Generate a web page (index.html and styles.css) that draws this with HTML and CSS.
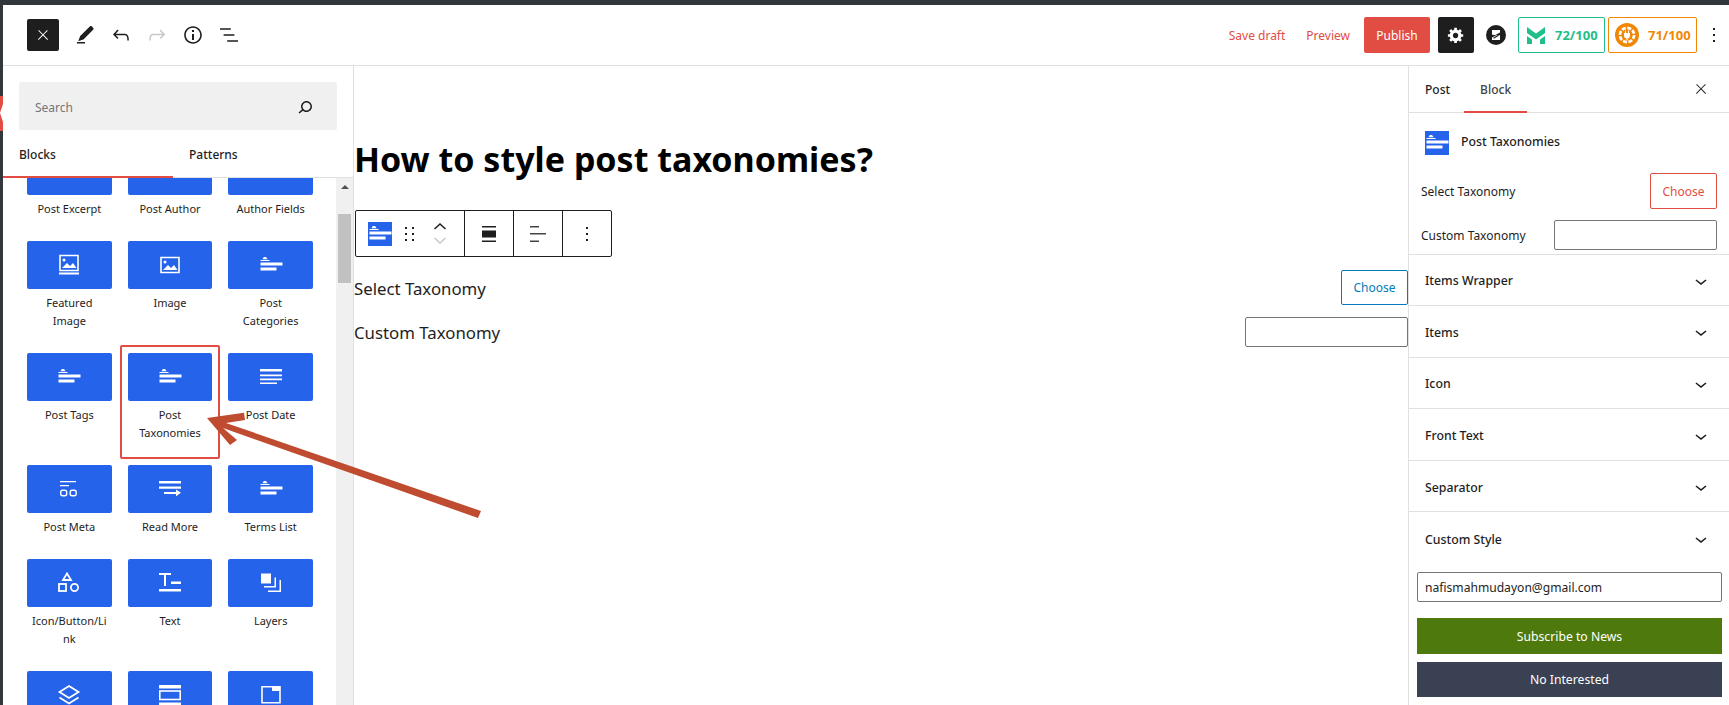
FILE: index.html
```html
<!DOCTYPE html>
<html>
    <head>
        <title>How to style post taxonomies?</title>
        <meta charset="UTF-8">
        <meta name="viewport" content="width=device-width, initial-scale=1.0">
        <link rel="stylesheet" href="styles.css">
    </head>
    <body>
        <svg class="iconDefs" width="0" height="0">
            <symbol id="i-close" viewBox="0 0 24 24"><path d="M13 11.800l6.100-6.300-1-1-6.100 6.200-6.100-6.200-1 1 6.100 6.300-6.500 6.700 1 1 6.500-6.600 6.500 6.600 1-1z"/></symbol>
            <symbol id="i-chevron" viewBox="0 0 24 24"><path d="M17.500 11.600L12 16l-5.500-4.400.9-1.200L12 14l4.500-3.600 1 1.200z"/></symbol>
            <symbol id="i-terms" viewBox="0 0 24 24"><path d="M3.500 6.200L4.800 4H7l1.600 2.200zM1.500 7h9v1h-9zM1.500 9.500h22v3h-22zM1.500 14.500h16v3h-16z"/></symbol>
            <symbol id="i-dots" viewBox="0 0 24 24"><path d="M11 5h2v2h-2zM11 11h2v2h-2zM11 17h2v2h-2z"/></symbol>
        </svg>

        <div class="adminTop"></div>
        <div class="shell">
            <div class="adminSide"><div class="adminSideCurrent"></div></div>
            <div class="editor">
                <div class="topBar">
                    <div class="topLeft">
                        <button class="closeButton"><svg class="iconWhite" width="16" height="16"><use href="#i-close"/></svg></button>
                        <svg class="icon" viewBox="0 0 24 24" width="24" height="24"><path d="M4 20.500h8V19H4zM18.900 3.500c-.6-.6-1.500-.6-2.100 0L7.200 13.100c-.1.1-.2.2-.2.3l-1.500 4.200c-.1.3.2.6.5.5l4.200-1.500c.1 0 .2-.1.3-.2l9.600-9.600c.6-.6.6-1.500 0-2.100z"/></svg>
                        <svg class="icon" viewBox="0 0 24 24" width="24" height="24"><path d="M18.300 11.700c-.6-.6-1.400-.9-2.300-.9H6.700l2.900-3.300-1.100-1-4.500 5L8.500 16l1-1-2.700-2.700H16c.5 0 .9.2 1.300.5 1 1 1 3.400 1 4.500v.3h1.500v-.2c0-1.500 0-4.300-1.500-5.700z"/></svg>
                        <svg class="icon iconOff" viewBox="0 0 24 24" width="24" height="24"><path d="M15.600 6.500l-1.100 1 2.900 3.300H8c-.9 0-1.700.3-2.300.9-1.400 1.500-1.400 4.200-1.400 5.600v.2h1.500v-.3c0-1.100 0-3.500 1-4.500.3-.3.7-.5 1.300-.5h9.200L14.500 15l1.100 1.100 4.600-4.600-4.600-5z"/></svg>
                        <svg class="icon" viewBox="0 0 24 24" width="24" height="24"><path d="M12 3.200c-4.800 0-8.800 3.900-8.800 8.800 0 4.800 3.900 8.800 8.800 8.800 4.800 0 8.800-3.900 8.800-8.800 0-4.800-4-8.800-8.800-8.800zm0 16c-4 0-7.200-3.300-7.200-7.200C4.800 8 8 4.800 12 4.800s7.200 3.300 7.200 7.200c0 4-3.200 7.200-7.200 7.200zM11 17h2v-6h-2v6zm0-8h2V7h-2v2z"/></svg>
                        <svg class="icon" viewBox="0 0 24 24" width="24" height="24"><path d="M13.800 5.200H3v1.500h10.800V5.200zm-3.600 12v1.500H21v-1.500H10.200zm7.200-6H6.600v1.500h10.800v-1.500z"/></svg>
                    </div>
                    <div class="topRight">
                        <a class="topLink saveLink">Save draft</a>
                        <a class="topLink previewLink">Preview</a>
                        <button class="publishButton">Publish</button>
                        <button class="gearButton">
                            <svg class="iconWhite" viewBox="0 0 20 20" width="18" height="18"><path d="M18 12h-2.180c-.17.7-.44 1.350-.81 1.930l1.540 1.540-2.100 2.100-1.540-1.540c-.58.36-1.230.63-1.910.79V19H8v-2.180c-.68-.16-1.330-.43-1.910-.79l-1.540 1.540-2.120-2.120 1.540-1.540c-.36-.58-.63-1.230-.79-1.910H1V9.030h2.170c.16-.7.44-1.350.8-1.940L2.430 5.550l2.100-2.100 1.540 1.540c.58-.37 1.240-.64 1.930-.81V2h3v2.180c.68.16 1.330.43 1.910.79l1.540-1.540 2.120 2.120-1.540 1.540c.36.59.64 1.240.8 1.940H18V12zm-8.500 1.500c1.660 0 3-1.340 3-3s-1.340-3-3-3-3 1.340-3 3 1.340 3 3 3z"/></svg>
                        </button>
                        <svg class="brandLogo" viewBox="0 0 20 20" width="20" height="20">
                            <circle cx="10" cy="10" r="10" fill="#1e1e1e"/>
                            <path d="M6 5h8v2.400L9.400 10 14 10.200V15H6v-2.400L10.600 10 6 9.800z" fill="#fff"/>
                            <path d="M7.500 13.200l5-3" stroke="#1e1e1e" stroke-width="1.200"/>
                        </svg>
                        <div class="scoreBadge scoreGreen">
                            <svg viewBox="0 0 18 17" width="18" height="17"><path d="M0 0l9 6.500L18 0v6l-9 6.500L0 6zM0 9l5 3.600V17H0zM18 9l-5 3.600V17h5z" fill="#1fbe8a"/></svg>
                            <span>72/100</span>
                        </div>
                        <div class="scoreBadge scoreOrange">
                            <svg viewBox="0 0 24 24" width="24" height="24">
                                <circle cx="12" cy="12" r="12" fill="#f28705"/>
                                <circle cx="12" cy="12" r="7" fill="none" stroke="#fff" stroke-width="3" stroke-dasharray="4 1.500"/>
                                <circle cx="12" cy="12" r="5.600" fill="#f28705"/>
                                <path d="M9 10h6v2.500a3 3 0 0 1-6 0zM10 7.500h1V10h-1zM13 7.500h1V10h-1zM11.400 15h1.200v2.500h-1.200z" fill="#fff"/>
                            </svg>
                            <span>71/100</span>
                        </div>
                        <svg class="icon moreIcon" width="24" height="24"><use href="#i-dots"/></svg>
                    </div>
                </div>

                <div class="mainArea">
                    <div class="inserter">
                        <div class="searchWrap">
                            <div class="searchBox">
                                <span>Search</span>
                                <svg class="icon" viewBox="0 0 24 24" width="24" height="24"><path d="M13.500 6C10.500 6 8 8.500 8 11.500c0 1.100.3 2.100.9 3l-3.400 3 1 1.100 3.400-2.900c1 .9 2.200 1.400 3.600 1.400 3 0 5.500-2.500 5.500-5.500C19 8.500 16.500 6 13.500 6zm0 9.500c-2.200 0-4-1.800-4-4s1.800-4 4-4 4 1.800 4 4-1.800 4-4 4z"/></svg>
                            </div>
                        </div>
                        <div class="inserterTabs">
                            <div class="inserterTab tabActive">Blocks</div>
                            <div class="inserterTab">Patterns</div>
                        </div>
                        <div class="inserterBody">
                            <div class="blockScroll">
                                <div class="blockGrid">
                                    <div class="blockItem"><div class="blockTile"></div><div class="blockName">Post Excerpt</div></div>
                                    <div class="blockItem"><div class="blockTile"></div><div class="blockName">Post Author</div></div>
                                    <div class="blockItem"><div class="blockTile"></div><div class="blockName">Author Fields</div></div>

                                    <div class="blockItem">
                                        <div class="blockTile"><svg class="tileIcon" viewBox="0 0 24 24" width="24" height="24"><path d="M3 2.500h18v15H3z" fill="none" stroke="#fff" stroke-width="1.600"/><path d="M5 15l5-5 3 3 3-3 3.500 5z" fill="#fff"/><circle cx="7" cy="7" r="1.500" fill="#fff"/><path d="M2 19.500h20v2H2z" fill="#fff"/></svg></div>
                                        <div class="blockName">Featured<br>Image</div>
                                    </div>
                                    <div class="blockItem">
                                        <div class="blockTile"><svg class="tileIcon" viewBox="0 0 24 24" width="24" height="24"><path d="M3 4.500h18v15H3z" fill="none" stroke="#fff" stroke-width="1.600"/><path d="M5 17l5-5 3 3 3-3 3.500 5z" fill="#fff"/><circle cx="7" cy="9" r="1.500" fill="#fff"/></svg></div>
                                        <div class="blockName">Image</div>
                                    </div>
                                    <div class="blockItem">
                                        <div class="blockTile"><svg class="tileIcon iconWhite" width="24" height="24"><use href="#i-terms"/></svg></div>
                                        <div class="blockName">Post<br>Categories</div>
                                    </div>

                                    <div class="blockItem">
                                        <div class="blockTile"><svg class="tileIcon iconWhite" width="24" height="24"><use href="#i-terms"/></svg></div>
                                        <div class="blockName">Post Tags</div>
                                    </div>
                                    <div class="blockItem marked">
                                        <div class="blockTile"><svg class="tileIcon iconWhite" width="24" height="24"><use href="#i-terms"/></svg></div>
                                        <div class="blockName">Post<br>Taxonomies</div>
                                    </div>
                                    <div class="blockItem">
                                        <div class="blockTile"><svg class="tileIcon iconWhite" viewBox="0 0 24 24" width="24" height="24"><path d="M1 4h22v2.400H1zM1 9.500h22v1.800H1zM1 13.500h22v1.800H1zM1 17.500h17v1.600H1z"/></svg></div>
                                        <div class="blockName">Post Date</div>
                                    </div>

                                    <div class="blockItem">
                                        <div class="blockTile"><svg class="tileIcon" viewBox="0 0 24 24" width="24" height="24"><path d="M3 4h16v1.200H3zM3 8h9v1.200H3z" fill="#fff"/><rect x="3.700" y="13.200" width="6" height="5.600" rx="2" fill="none" stroke="#fff" stroke-width="1.400"/><rect x="13.200" y="13.200" width="6" height="5.600" rx="2" fill="none" stroke="#fff" stroke-width="1.400"/></svg></div>
                                        <div class="blockName">Post Meta</div>
                                    </div>
                                    <div class="blockItem">
                                        <div class="blockTile"><svg class="tileIcon iconWhite" viewBox="0 0 24 24" width="24" height="24"><path d="M1 4h22v2.600H1zM1 9.500h22v2.200H1zM6 15h12v-2.500l5 3.300-5 3.400V17H6z"/></svg></div>
                                        <div class="blockName">Read More</div>
                                    </div>
                                    <div class="blockItem">
                                        <div class="blockTile"><svg class="tileIcon iconWhite" width="24" height="24"><use href="#i-terms"/></svg></div>
                                        <div class="blockName">Terms List</div>
                                    </div>

                                    <div class="blockItem">
                                        <div class="blockTile"><svg class="tileIcon" viewBox="0 0 24 24" width="24" height="24" fill="none" stroke="#fff" stroke-width="1.800"><path d="M10 2.500l4 6.500H6z"/><rect x="2" y="13" width="7" height="7"/><circle cx="17.500" cy="16.500" r="3.600"/></svg></div>
                                        <div class="blockName">Icon/Button/Li<br>nk</div>
                                    </div>
                                    <div class="blockItem">
                                        <div class="blockTile"><svg class="tileIcon iconWhite" viewBox="0 0 24 24" width="24" height="24"><path d="M1 2h12v2H8v11H6V4H1zM13 10.500h10v2.400H13zM1 18h22v2.600H1z"/></svg></div>
                                        <div class="blockName">Text</div>
                                    </div>
                                    <div class="blockItem">
                                        <div class="blockTile"><svg class="tileIcon iconWhite" viewBox="0 0 24 24" width="24" height="24"><path d="M2 2.500h10v10H2zM15.500 6.500H17V15H15.500zM5 15h12v1.500H5zM20.500 9H22v12h-1.500zM9 19.500h13V21H9z"/></svg></div>
                                        <div class="blockName">Layers</div>
                                    </div>

                                    <div class="blockItem">
                                        <div class="blockTile"><svg class="tileIcon" viewBox="0 0 24 24" width="24" height="24" fill="none" stroke="#fff" stroke-width="1.800"><path d="M12 3l9.500 6-9.500 6-9.500-6zM2.500 14.500l9.500 6 9.500-6"/></svg></div>
                                    </div>
                                    <div class="blockItem">
                                        <div class="blockTile"><svg class="tileIcon" viewBox="0 0 24 24" width="24" height="24"><path d="M1 2h22v3.400H1zM1 19.500h22V23H1z" fill="#fff"/><rect x="1.800" y="8" width="20.400" height="8.500" fill="none" stroke="#fff" stroke-width="1.600"/></svg></div>
                                    </div>
                                    <div class="blockItem">
                                        <div class="blockTile"><svg class="tileIcon" viewBox="0 0 24 24" width="24" height="24"><path d="M3 3.800h18v16H3z" fill="none" stroke="#fff" stroke-width="1.600"/><path d="M13 3.800h8V8h-8z" fill="#fff"/></svg></div>
                                    </div>
                                </div>
                            </div>
                            <div class="scrollTrack">
                                <div class="scrollUp"></div>
                                <div class="scrollThumb"></div>
                            </div>
                        </div>
                    </div>

                    <div class="canvas">
                        <h1 class="postTitle">How to style post taxonomies?</h1>
                        <div class="blockToolbar">
                            <div class="toolGroup toolMain">
                                <div class="toolTile"><svg class="iconWhite" width="24" height="24"><use href="#i-terms"/></svg></div>
                                <svg class="toolDrag" viewBox="0 0 12 18" width="12" height="18"><path d="M1 2h2v2H1zM8 2h2v2H8zM1 8h2v2H1zM8 8h2v2H8zM1 14h2v2H1zM8 14h2v2H8z"/></svg>
                                <div class="toolMover">
                                    <svg viewBox="0 0 14 8" width="14" height="8" fill="none" stroke="#1e1e1e" stroke-width="1.500"><path d="M1.500 7L7 2l5.500 5"/></svg>
                                    <svg viewBox="0 0 14 8" width="14" height="8" fill="none" stroke="#c8c8c8" stroke-width="1.500"><path d="M1.500 1L7 6l5.500-5"/></svg>
                                </div>
                            </div>
                            <div class="toolGroup">
                                <svg viewBox="0 0 14 16" width="14" height="16"><path d="M0 0h14v1.500H0zM0 4.500h14v7H0zM0 14.500h14V16H0z" fill="#1e1e1e"/></svg>
                            </div>
                            <div class="toolGroup">
                                <svg viewBox="0 0 16 16" width="16" height="16"><path d="M0 0h9v1.500H0zM0 7h16v1.500H0zM0 14.500h9V16H0z" fill="#444"/></svg>
                            </div>
                            <div class="toolGroup">
                                <svg class="icon" width="24" height="24"><use href="#i-dots"/></svg>
                            </div>
                        </div>
                        <div class="fieldRow">
                            <span class="fieldLabel">Select Taxonomy</span>
                            <button class="chooseButton">Choose</button>
                        </div>
                        <div class="fieldRow fieldRowInput">
                            <span>Custom Taxonomy</span>
                            <input class="fieldInput" type="text">
                        </div>
                    </div>

                    <div class="sidebar">
                        <div class="sideTabs">
                            <div class="sideTab">Post</div>
                            <div class="sideTab sideTabActive">Block</div>
                            <svg class="icon sideClose" width="16" height="16"><use href="#i-close"/></svg>
                        </div>
                        <div class="sideBlockHead">
                            <div class="sideTile"><svg class="iconWhite" width="24" height="24"><use href="#i-terms"/></svg></div>
                            <span class="sideBlockName">Post Taxonomies</span>
                        </div>
                        <div class="sideField">
                            <span>Select Taxonomy</span>
                            <button class="sideChoose">Choose</button>
                        </div>
                        <div class="sideField sideFieldInput">
                            <span>Custom Taxonomy</span>
                            <input class="sideInput" type="text">
                        </div>
                        <div class="panelRow firstPanel"><span>Items Wrapper</span><svg class="icon" width="24" height="24"><use href="#i-chevron"/></svg></div>
                        <div class="panelRow"><span>Items</span><svg class="icon" width="24" height="24"><use href="#i-chevron"/></svg></div>
                        <div class="panelRow"><span>Icon</span><svg class="icon" width="24" height="24"><use href="#i-chevron"/></svg></div>
                        <div class="panelRow"><span>Front Text</span><svg class="icon" width="24" height="24"><use href="#i-chevron"/></svg></div>
                        <div class="panelRow"><span>Separator</span><svg class="icon" width="24" height="24"><use href="#i-chevron"/></svg></div>
                        <div class="panelRow lastPanel"><span>Custom Style</span><svg class="icon" width="24" height="24"><use href="#i-chevron"/></svg></div>
                        <div class="newsBox">
                            <input class="newsInput" type="text" value="nafismahmudayon@gmail.com">
                            <button class="newsButton subscribeButton">Subscribe to News</button>
                            <button class="newsButton noButton">No Interested</button>
                        </div>
                    </div>
                </div>
            </div>
        </div>

        <!-- red arrow drawn over the screenshot -->
        <svg class="arrowMark" viewBox="0 0 1729 705" width="1729" height="705">
            <path d="M207 418L244 412.700L245 420L226 423L481 511L478 518L223 428L237 440L230 445Z" fill="#bf4b30"/>
        </svg>
    </body>
</html>
```
FILE: styles.css
```css
*{
    box-sizing: border-box;
}
body{
    margin: 0;
    width: 1729px;
    height: 705px;
    overflow: hidden;
    position: relative;
    background-color: #fff;
    color: #1e1e1e;
    font-family: "Noto Sans", sans-serif;
    font-size: 12px;
}
button, input{
    font-family: inherit;
}
svg{
    display: block;
    flex: none;
}
.iconDefs{
    position: absolute;
}
.icon{
    fill: #1e1e1e;
}
.iconWhite{
    fill: #fff;
}
.iconOff{
    fill: #c8c8c8;
}

.adminTop{
    height: 5px;
    background-color: #32373c;
}
.shell{
    display: flex;
    height: 700px;
}
.adminSide{
    width: 3px;
    background-color: #32373c;
    padding-top: 91px;
}
.adminSideCurrent{
    height: 35px;
    background-color: #e24d43;
    position: relative;
}
/* little notch of the current admin menu item */
.adminSideCurrent::after{
    content: "";
    position: absolute;
    top: 8px;
    left: 0;
    border-top: 9px solid transparent;
    border-bottom: 9px solid transparent;
    border-right: 3px solid #fff;
}
.editor{
    flex: 1;
    min-width: 0;
    display: flex;
    flex-direction: column;
}

/* top bar */
.topBar{
    height: 61px;
    flex: none;
    border-bottom: 1px solid #e0e0e0;
    display: flex;
    justify-content: space-between;
    align-items: center;
    padding-left: 24px;
    padding-right: 3px;
}
.topLeft{
    display: flex;
    align-items: center;
    gap: 12px;
}
.closeButton{
    width: 32px;
    height: 32px;
    margin-right: 2px;
    padding: 8px;
    border: none;
    border-radius: 2px;
    background-color: #1e1e1e;
}
.topRight{
    display: flex;
    align-items: center;
}
.topLink{
    color: #e24d43;
    font-size: 12px;
}
.saveLink{
    margin-right: 21px;
}
.previewLink{
    margin-right: 14px;
}
.publishButton{
    width: 66px;
    height: 36px;
    border: none;
    border-radius: 2px;
    background-color: #e24d43;
    color: #fff;
    font-size: 12px;
    margin-right: 8px;
}
.gearButton{
    width: 36px;
    height: 36px;
    border: none;
    border-radius: 2px;
    background-color: #1e1e1e;
    padding: 9px;
    margin-right: 12px;
}
.brandLogo{
    margin-right: 12px;
}
.scoreBadge{
    height: 36px;
    display: flex;
    align-items: center;
    border-radius: 2px;
    font-size: 13px;
    font-weight: 700;
}
.scoreGreen{
    width: 87px;
    border: 1px solid #1fbe8a;
    color: #1fbe8a;
    padding-left: 8px;
    gap: 10px;
    margin-right: 3px;
}
.scoreOrange{
    width: 89px;
    border: 1px solid #f28705;
    color: #f28705;
    padding-left: 6px;
    gap: 9px;
    margin-right: 5px;
}

/* inserter */
.mainArea{
    flex: 1;
    min-height: 0;
    display: flex;
}
.inserter{
    width: 351px;
    flex: none;
    border-right: 1px solid #e0e0e0;
    display: flex;
    flex-direction: column;
}
.searchWrap{
    padding: 16px 16px 0;
}
.searchBox{
    height: 48px;
    background-color: #f0f0f0;
    border-radius: 2px;
    display: flex;
    align-items: center;
    justify-content: space-between;
    padding: 2px 20px 0 16px;
    color: #757575;
}
.inserterTabs{
    display: flex;
    height: 48px;
    flex: none;
    border-bottom: 1px solid #e0e0e0;
}
.inserterTab{
    width: 170px;
    padding-left: 16px;
    line-height: 49px;
    height: 48px;
    font-weight: 500;
}
.tabActive{
    border-bottom: 2px solid #e24d43;
}
.inserterBody{
    flex: 1;
    min-height: 0;
    display: flex;
}
.blockScroll{
    flex: 1;
    min-width: 0;
    overflow: hidden;
}
.blockGrid{
    display: grid;
    grid-template-columns: repeat(3, minmax(0, 1fr));
    column-gap: 16px;
    margin-top: -31px;
    padding: 0 23px 0 24px;
}
.blockItem{
    position: relative;
    padding-bottom: 23px;
}
.marked::after{
    content: "";
    position: absolute;
    top: -8px;
    left: -8px;
    right: -8px;
    height: 110px;
    border: 2px solid #e24d43;
    border-radius: 2px;
}
.blockTile{
    height: 48px;
    background-color: #2563eb;
    border-radius: 2px;
    display: flex;
    align-items: center;
    justify-content: center;
}
.blockName{
    margin-top: 5px;
    font-size: 11px;
    line-height: 18px;
    text-align: center;
    white-space: nowrap;
}
.scrollTrack{
    width: 17px;
    flex: none;
    background-color: #f0f0f0;
    padding-top: 7px;
}
.scrollUp{
    width: 0;
    height: 0;
    margin: 0 auto;
    border-left: 4px solid transparent;
    border-right: 4px solid transparent;
    border-bottom: 4px solid #505050;
}
.scrollThumb{
    width: 13px;
    height: 69px;
    margin: 25px auto 0;
    background-color: #c1c1c1;
}

/* post canvas */
.canvas{
    flex: 1;
    min-width: 0;
    padding-top: 68px;
}
.postTitle{
    margin: 0;
    font-size: 34px;
    line-height: 50px;
    font-weight: 700;
    color: #000;
}
.blockToolbar{
    display: flex;
    width: 257px;
    height: 47px;
    margin: 26px 0 13px 1px;
    border: 1px solid #1e1e1e;
    border-radius: 2px;
}
.toolGroup{
    width: 49px;
    display: flex;
    align-items: center;
    justify-content: center;
    border-left: 1px solid #1e1e1e;
}
.toolMain{
    width: 108px;
    flex: none;
    border-left: none;
    justify-content: flex-start;
    padding-left: 12px;
}
.toolTile{
    width: 24px;
    height: 24px;
    background-color: #2563eb;
}
.toolDrag{
    margin-left: 12px;
    fill: #1e1e1e;
}
.toolMover{
    margin-left: 17px;
    display: flex;
    flex-direction: column;
    gap: 7px;
}
.fieldRow{
    display: flex;
    justify-content: space-between;
    align-items: center;
    font-size: 16.8px;
    height: 35px;
}
.fieldLabel{
    margin-top: 2px;
}
.fieldRowInput{
    margin-top: 12px;
    height: 30px;
}
.chooseButton{
    width: 67px;
    height: 35px;
    background-color: #fff;
    border: 1px solid #007cba;
    border-radius: 2px;
    color: #007cba;
    font-size: 12px;
}
.fieldInput{
    width: 163px;
    height: 30px;
    border: 1px solid #757575;
    border-radius: 2px;
}

/* settings sidebar */
.sidebar{
    width: 321px;
    flex: none;
    border-left: 1px solid #e0e0e0;
}
.sideTabs{
    height: 47px;
    display: flex;
    border-bottom: 1px solid #e0e0e0;
    padding-right: 20px;
}
.sideTab{
    padding: 0 14px 0 16px;
    line-height: 47px;
    height: 47px;
    font-weight: 500;
}
.sideTabActive{
    padding: 0 16px 0 16px;
    color: #444;
    border-bottom: 2px solid #e24d43;
}
.sideClose{
    margin: 15px 0 0 auto;
}
.sideBlockHead{
    display: flex;
    align-items: center;
    gap: 12px;
    padding: 18px 0 0 16px;
    font-size: 12.3px;
    font-weight: 500;
}
.sideBlockName{
    margin-bottom: 3px;
}
.sideTile{
    width: 24px;
    height: 24px;
    background-color: #2563eb;
}
.sideField{
    display: flex;
    justify-content: space-between;
    align-items: center;
    padding: 0 12px 0 12px;
    margin-top: 18px;
    height: 36px;
}
.sideFieldInput{
    margin-top: 11px;
    height: 30px;
}
.sideChoose{
    width: 67px;
    height: 36px;
    background-color: #fff;
    border: 1px solid #e24d43;
    border-radius: 2px;
    color: #e24d43;
    font-size: 12px;
}
.sideInput{
    width: 163px;
    height: 30px;
    border: 1px solid #757575;
    border-radius: 2px;
}
.panelRow{
    height: 51.6px;
    display: flex;
    justify-content: space-between;
    align-items: center;
    padding: 2px 16px 0;
    border-top: 1px solid #e0e0e0;
    font-size: 12.3px;
    font-weight: 500;
}
.firstPanel{
    margin-top: 3.5px;
}
.lastPanel{
    height: 52.6px;
}
.newsBox{
    padding: 0 7px 0 8px;
}
.newsInput{
    display: block;
    width: 100%;
    height: 30px;
    margin-top: 7.9px;
    padding: 2px 7px 0;
    border: 1px solid #757575;
    border-radius: 2px;
    font-size: 12.1px;
    color: #1e1e1e;
}
.newsButton{
    display: block;
    width: 100%;
    border: none;
    color: #fff;
    font-size: 12.2px;
}
.subscribeButton{
    height: 36px;
    margin-top: 16px;
    padding-top: 3px;
    background-color: #4e7a0d;
}
.noButton{
    height: 35px;
    margin-top: 8px;
    padding-top: 2px;
    background-color: #394153;
}

.arrowMark{
    position: absolute;
    top: 0;
    left: 0;
    pointer-events: none;
}
```
